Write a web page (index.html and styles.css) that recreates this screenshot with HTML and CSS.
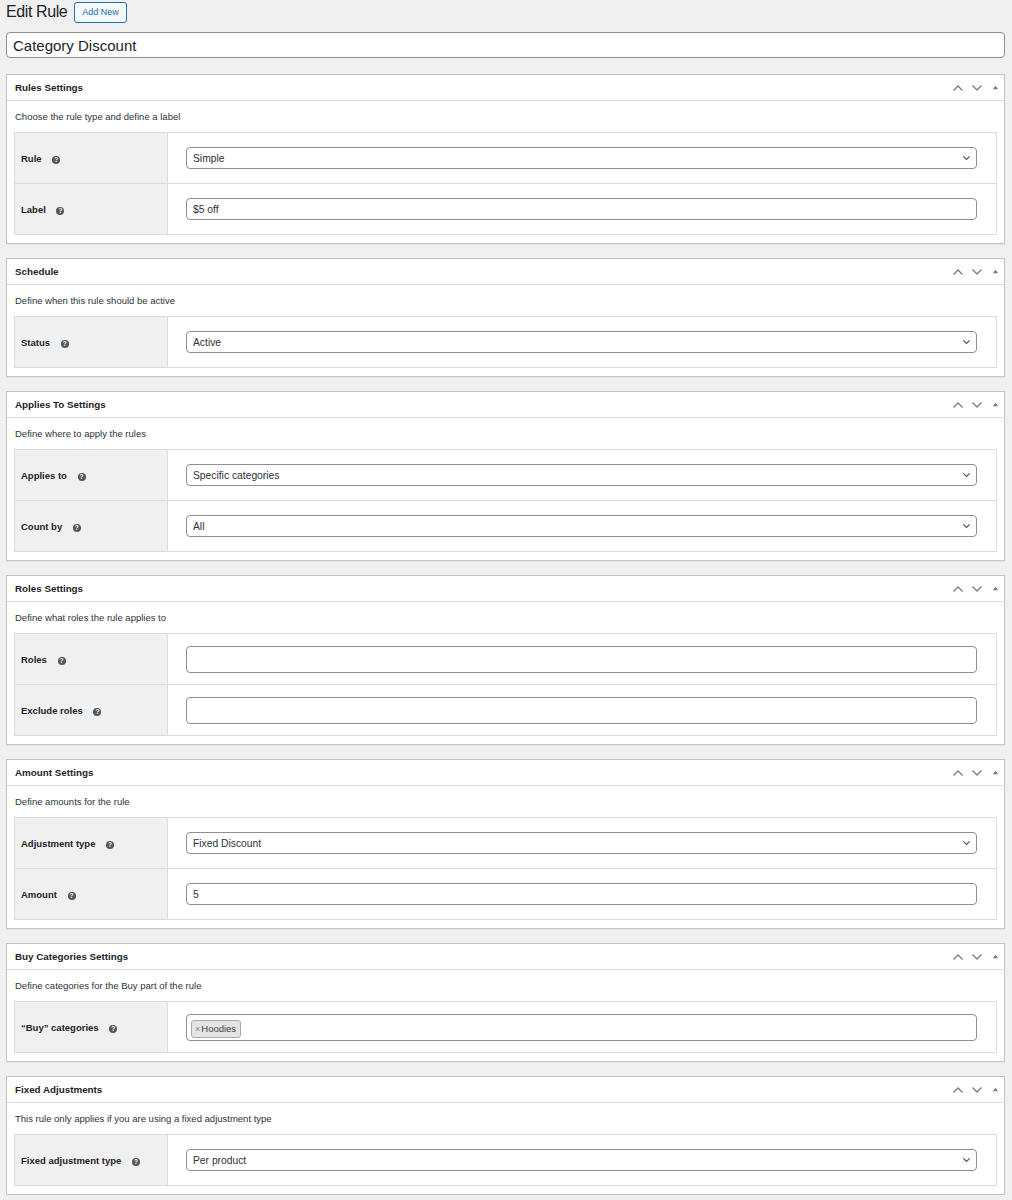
FILE: index.html
```html
<!DOCTYPE html>
<html lang="en">
<head>
<meta charset="UTF-8" />
<title>Edit Rule</title>
<link rel="stylesheet" href="styles.css">
</head>
<body>
<div class="wrap">
  <div class="page-head">
    <h1 class="page-title">Edit Rule</h1>
    <a class="add-new" href="#">Add New</a>
  </div>
  <input class="title-input" type="text" value="Category Discount">

  <!-- Rules Settings -->
  <div class="postbox">
    <div class="postbox-head">
      <h2>Rules Settings</h2>
      <div class="handles">
        <svg viewBox="0 0 12 8"><path d="M1.5 6.5 6 2l4.5 4.5"/></svg>
        <svg viewBox="0 0 12 8"><path d="M1.5 1.5 6 6l4.5-4.5"/></svg>
        <svg class="tri" viewBox="0 0 8 8"><path d="M4 2 7 6H1z"/></svg>
      </div>
    </div>
    <p class="desc">Choose the rule type and define a label</p>
    <table class="form-table">
      <tr>
        <th>Rule <span class="help">?</span></th>
        <td><div class="select"><select><option>Simple</option></select><svg viewBox="0 0 10 6"><path d="M1.5 1.2 5 4.6l3.5-3.4"/></svg></div></td>
      </tr>
      <tr>
        <th>Label <span class="help">?</span></th>
        <td><input class="text" type="text" value="$5 off"></td>
      </tr>
    </table>
  </div>

  <!-- Schedule -->
  <div class="postbox">
    <div class="postbox-head">
      <h2>Schedule</h2>
      <div class="handles">
        <svg viewBox="0 0 12 8"><path d="M1.5 6.5 6 2l4.5 4.5"/></svg>
        <svg viewBox="0 0 12 8"><path d="M1.5 1.5 6 6l4.5-4.5"/></svg>
        <svg class="tri" viewBox="0 0 8 8"><path d="M4 2 7 6H1z"/></svg>
      </div>
    </div>
    <p class="desc">Define when this rule should be active</p>
    <table class="form-table">
      <tr>
        <th>Status <span class="help">?</span></th>
        <td><div class="select"><select><option>Active</option></select><svg viewBox="0 0 10 6"><path d="M1.5 1.2 5 4.6l3.5-3.4"/></svg></div></td>
      </tr>
    </table>
  </div>

  <!-- Applies To -->
  <div class="postbox">
    <div class="postbox-head">
      <h2>Applies To Settings</h2>
      <div class="handles">
        <svg viewBox="0 0 12 8"><path d="M1.5 6.5 6 2l4.5 4.5"/></svg>
        <svg viewBox="0 0 12 8"><path d="M1.5 1.5 6 6l4.5-4.5"/></svg>
        <svg class="tri" viewBox="0 0 8 8"><path d="M4 2 7 6H1z"/></svg>
      </div>
    </div>
    <p class="desc">Define where to apply the rules</p>
    <table class="form-table">
      <tr>
        <th>Applies to <span class="help">?</span></th>
        <td><div class="select"><select><option>Specific categories</option></select><svg viewBox="0 0 10 6"><path d="M1.5 1.2 5 4.6l3.5-3.4"/></svg></div></td>
      </tr>
      <tr>
        <th>Count by <span class="help">?</span></th>
        <td><div class="select"><select><option>All</option></select><svg viewBox="0 0 10 6"><path d="M1.5 1.2 5 4.6l3.5-3.4"/></svg></div></td>
      </tr>
    </table>
  </div>

  <!-- Roles -->
  <div class="postbox">
    <div class="postbox-head">
      <h2>Roles Settings</h2>
      <div class="handles">
        <svg viewBox="0 0 12 8"><path d="M1.5 6.5 6 2l4.5 4.5"/></svg>
        <svg viewBox="0 0 12 8"><path d="M1.5 1.5 6 6l4.5-4.5"/></svg>
        <svg class="tri" viewBox="0 0 8 8"><path d="M4 2 7 6H1z"/></svg>
      </div>
    </div>
    <p class="desc">Define what roles the rule applies to</p>
    <table class="form-table">
      <tr>
        <th>Roles <span class="help">?</span></th>
        <td><div class="multi"></div></td>
      </tr>
      <tr>
        <th>Exclude roles <span class="help">?</span></th>
        <td><div class="multi"></div></td>
      </tr>
    </table>
  </div>

  <!-- Amount -->
  <div class="postbox">
    <div class="postbox-head">
      <h2>Amount Settings</h2>
      <div class="handles">
        <svg viewBox="0 0 12 8"><path d="M1.5 6.5 6 2l4.5 4.5"/></svg>
        <svg viewBox="0 0 12 8"><path d="M1.5 1.5 6 6l4.5-4.5"/></svg>
        <svg class="tri" viewBox="0 0 8 8"><path d="M4 2 7 6H1z"/></svg>
      </div>
    </div>
    <p class="desc">Define amounts for the rule</p>
    <table class="form-table">
      <tr>
        <th>Adjustment type <span class="help">?</span></th>
        <td><div class="select"><select><option>Fixed Discount</option></select><svg viewBox="0 0 10 6"><path d="M1.5 1.2 5 4.6l3.5-3.4"/></svg></div></td>
      </tr>
      <tr>
        <th>Amount <span class="help">?</span></th>
        <td><input class="text" type="text" value="5"></td>
      </tr>
    </table>
  </div>

  <!-- Buy Categories -->
  <div class="postbox">
    <div class="postbox-head">
      <h2>Buy Categories Settings</h2>
      <div class="handles">
        <svg viewBox="0 0 12 8"><path d="M1.5 6.5 6 2l4.5 4.5"/></svg>
        <svg viewBox="0 0 12 8"><path d="M1.5 1.5 6 6l4.5-4.5"/></svg>
        <svg class="tri" viewBox="0 0 8 8"><path d="M4 2 7 6H1z"/></svg>
      </div>
    </div>
    <p class="desc">Define categories for the Buy part of the rule</p>
    <table class="form-table">
      <tr>
        <th>“Buy” categories <span class="help">?</span></th>
        <td><div class="multi"><span class="tag"><span class="x">×</span>Hoodies</span></div></td>
      </tr>
    </table>
  </div>

  <!-- Fixed Adjustments -->
  <div class="postbox">
    <div class="postbox-head">
      <h2>Fixed Adjustments</h2>
      <div class="handles">
        <svg viewBox="0 0 12 8"><path d="M1.5 6.5 6 2l4.5 4.5"/></svg>
        <svg viewBox="0 0 12 8"><path d="M1.5 1.5 6 6l4.5-4.5"/></svg>
        <svg class="tri" viewBox="0 0 8 8"><path d="M4 2 7 6H1z"/></svg>
      </div>
    </div>
    <p class="desc">This rule only applies if you are using a fixed adjustment type</p>
    <table class="form-table">
      <tr>
        <th>Fixed adjustment type <span class="help">?</span></th>
        <td><div class="select"><select><option>Per product</option></select><svg viewBox="0 0 10 6"><path d="M1.5 1.2 5 4.6l3.5-3.4"/></svg></div></td>
      </tr>
    </table>
  </div>
</div>
</body>
</html>
```

FILE: styles.css
```css
* { box-sizing: border-box; }
body {
  margin: 0;
  background: #f0f0f1;
  font-family: "Liberation Sans", Arial, sans-serif;
  color: #1d2327;
}
.wrap { padding: 0 7px 0 6px; }

/* Heading */
.page-head { display: flex; align-items: center; gap: 7px; height: 24px; padding-top: 0; }
.page-title { margin: 0; font-size: 16px; font-weight: 400; letter-spacing: -0.4px; }
.add-new {
  display: inline-block; height: 21px; line-height: 19px; padding: 0 7px;
  border: 1px solid #2271b1; border-radius: 3px; background: #f6f7f7;
  color: #2271b1; font-size: 9px; text-decoration: none;
}
.title-input {
  display: block; width: 100%; height: 26px; margin-top: 8px;
  border: 1px solid #8c8f94; border-radius: 4px; background: #fff;
  padding: 0 6px; font: 15px "Liberation Sans", Arial, sans-serif; color: #1d2327;
}

/* Postbox */
.postbox {
  margin-top: 14px; background: #fff;
  border: 1px solid #c3c4c7; box-shadow: 0 1px 1px rgba(0,0,0,0.04);
  padding-bottom: 8px;
}
.title-input + .postbox { margin-top: 16px; }
.postbox-head {
  display: flex; align-items: center; justify-content: space-between;
  height: 26px; border-bottom: 1px solid #dcdcde; padding: 0 5px 0 8px;
}
.postbox-head h2 { margin: 0; font-size: 9.8px; font-weight: 700; }
.handles { display: flex; align-items: center; gap: 7px; }
.handles svg { width: 12px; height: 8px; fill: none; stroke: #787c82; stroke-width: 1.3; }
.handles svg.tri { width: 7px; height: 7px; fill: #787c82; stroke: none; margin-left: 2px; }
.desc { margin: 0; height: 31px; padding: 10px 8px 0; font-size: 9.5px; color: #2c3338; }

/* Form table */
.form-table {
  width: calc(100% - 14px); margin: 0 7px;
  border-collapse: collapse; border: 1px solid #dcdcde;
}
.form-table tr + tr { border-top: 1px solid #dcdcde; }
.form-table th {
  width: 153px; height: 51px; background: #f0f0f1;
  border-right: 1px solid #dcdcde;
  padding: 0 0 0 6px; text-align: left; font-size: 9.5px; font-weight: 700;
}
.form-table td { padding: 0 19px 0 18px; }
.help {
  display: inline-block; width: 8px; height: 8px; margin-left: 8px; border-radius: 50%;
  background: #50575e; color: #fff; font-size: 6.5px; line-height: 8px;
  text-align: center; vertical-align: 0;
}
.select { position: relative; }
.select select, .text {
  display: block; width: 100%; height: 22px;
  border: 1px solid #8c8f94; border-radius: 4px; background: #fff;
  padding: 0 6px; font: 10.3px "Liberation Sans", Arial, sans-serif; color: #2c3338;
  appearance: none; -webkit-appearance: none;
}
.select svg {
  position: absolute; right: 6px; top: 8px; width: 9px; height: 6px;
  fill: none; stroke: #50575e; stroke-width: 1.4;
}
.multi {
  height: 27px; border: 1px solid #8c8f94; border-radius: 4px; background: #fff;
  padding: 3px 4px;
}
.tag {
  display: inline-flex; align-items: center; height: 18px; padding: 0 4px 0 3px;
  background: #e4e4e4; border: 1px solid #aaa; border-radius: 3px;
  font-size: 9.5px; color: #3c434a;
}
.tag .x { color: #888; font-size: 9px; margin-right: 1px; }
```
